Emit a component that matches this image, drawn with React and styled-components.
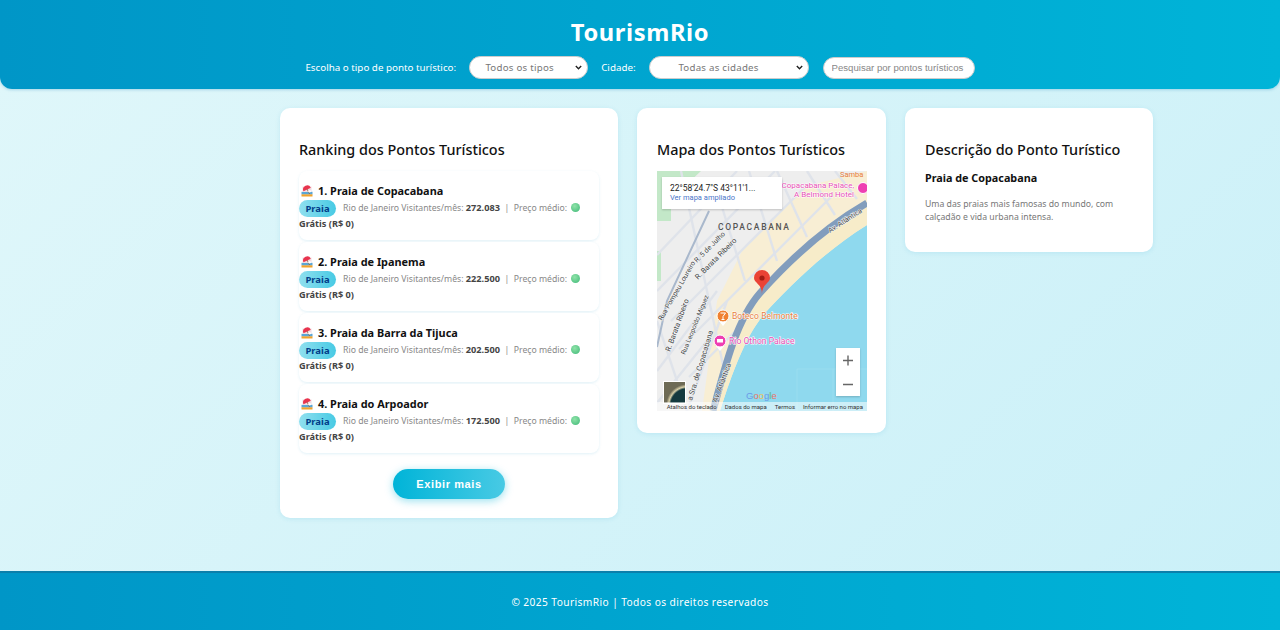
import React from 'react';
import styled, { createGlobalStyle } from 'styled-components';

const Global = createGlobalStyle`
  html, body { margin: 0; padding: 0; }
  body {
    font-family: "Noto Sans", "Open Sans", sans-serif;
    color: #111;
  }
`;

const Page = styled.div`
  min-height: 630px;
  display: flex;
  flex-direction: column;
  background: linear-gradient(135deg, #e0f7fa, #caf0f8);
`;

const Header = styled.header`
  height: 89px;
  box-sizing: border-box;
  padding-top: 16px;
  background: linear-gradient(90deg, #0096c7, #00b4d8);
  border-radius: 0 0 12px 12px;
  box-shadow: 0 1px 3px rgba(0, 119, 182, 0.25);
  color: #fff;
  display: flex;
  flex-direction: column;
  align-items: center;
`;

const Logo = styled.h1`
  margin: 0;
  font-size: 23.7px;
  line-height: 32px;
  font-weight: 700;
  letter-spacing: 0.6px;
`;

const Filters = styled.div`
  margin-top: 8px;
  display: flex;
  align-items: center;
  height: 23px;
`;

const FilterLabel = styled.label`
  font-size: 9.8px;
  margin-left: ${(p) => p.$left}px;
  margin-right: ${(p) => p.$right}px;
`;

const Select = styled.select`
  appearance: none;
  width: ${(p) => p.$width}px;
  height: 23px;
  box-sizing: border-box;
  border: 1px solid #ccc;
  border-radius: 12px;
  background: #fff url("data:image/svg+xml,%3Csvg xmlns='http://www.w3.org/2000/svg' width='7' height='5'%3E%3Cpath d='M.8 1l2.7 2.7L6.2 1' fill='none' stroke='%23222' stroke-width='1.4'/%3E%3C/svg%3E") no-repeat right 5px center;
  padding: 0 ${(p) => p.$inset}px 0 0;
  font-family: "Noto Sans", sans-serif;
  font-size: 9.7px;
  letter-spacing: 0.25px;
  color: #777;
  text-align: center;
`;

const Search = styled.input`
  width: 152px;
  height: 22px;
  margin-left: 14px;
  box-sizing: border-box;
  border: 1px solid #ccc;
  border-radius: 12px;
  padding: 0 8px;
  font-family: "Liberation Sans", sans-serif;
  font-size: 9.6px;
  &::placeholder { color: #888; }
`;

const Main = styled.main`
  flex: 1;
  display: flex;
  align-items: flex-start;
  gap: 19px;
  padding: 19px 0 0 280px;
`;

const Card = styled.section`
  width: ${(p) => p.$width}px;
  box-sizing: border-box;
  padding: 31px ${(p) => p.$pad}px 19px;
  background: #fff;
  border-radius: 10px;
  box-shadow: 0 1px 5px rgba(0, 150, 199, 0.12);
`;

const CardTitle = styled.h2`
  margin: 0 0 10px;
  font-size: 14.4px;
  line-height: 22px;
  font-weight: 500;
  color: #111;
  white-space: nowrap;
`;

const Item = styled.article`
  height: 69px;
  box-sizing: border-box;
  padding-top: 10px;
  margin-bottom: 2px;
  background: #fff;
  border-radius: 8px;
  box-shadow: 0 1px 3px rgba(0, 150, 199, 0.12);
`;

const ItemTitle = styled.h3`
  margin: 0;
  display: flex;
  align-items: center;
  gap: 5px;
  padding-left: 2px;
  font-size: 10.9px;
  line-height: 19px;
  font-weight: 700;
`;

const Info = styled.p`
  margin: 0;
  font-size: 8.7px;
  line-height: 14px;
  color: #888;
`;

const Badge = styled.span`
  display: inline-block;
  width: 37px;
  height: 17px;
  line-height: 17px;
  margin-right: 7px;
  text-align: center;
  vertical-align: middle;
  border-radius: 9px;
  background: linear-gradient(90deg, #90e0ef, #48cae4);
  color: #023e8a;
  font-weight: 700;
  font-size: 9.5px;
`;

const Strong = styled.strong`
  color: #444;
  font-size: 9.2px;
  font-weight: 700;
`;

const Dot = styled.span`
  display: inline-block;
  width: 9px;
  height: 9px;
  margin: 0 1px 0 2px;
  border-radius: 50%;
  vertical-align: -1px;
  background: radial-gradient(circle at 40% 35%, #8fe3a8, #3fb878);
`;

const More = styled.button`
  display: block;
  width: 112px;
  height: 30px;
  margin: 16px auto 0;
  border: none;
  border-radius: 15px;
  background: linear-gradient(90deg, #00b4d8, #48cae4);
  box-shadow: 0 2px 8px rgba(0, 180, 216, 0.4);
  color: #fff;
  font-family: "Liberation Sans", sans-serif;
  font-size: 11px;
  font-weight: 700;
  letter-spacing: 0.6px;
`;

const MapFrame = styled.div`
  width: 210px;
  height: 240px;
  margin-bottom: 3px;
  position: relative;
  overflow: hidden;
`;

const MapInfo = styled.div`
  position: absolute;
  left: 5px;
  top: 6px;
  width: 120px;
  height: 32px;
  box-sizing: border-box;
  padding: 6px 8px;
  background: #fff;
  box-shadow: 0 1px 2px rgba(0, 0, 0, 0.2);
  font-family: Roboto, sans-serif;
  font-size: 8.5px;
  line-height: 10px;
  color: #222;
`;

const MapLink = styled.div`
  color: #4a76c9;
  font-size: 7.5px;
`;

const Zoom = styled.div`
  position: absolute;
  right: 7px;
  bottom: 15px;
  width: 24px;
  height: 48px;
  background: #fff;
  box-shadow: 0 1px 2px rgba(0, 0, 0, 0.2);
`;

const Thumb = styled.div`
  position: absolute;
  left: 6px;
  bottom: 7px;
  width: 23px;
  height: 23px;
  border: 1px solid #fff;
  box-sizing: border-box;
  background: radial-gradient(circle at 110% 110%, #153a3f 50%, #d8cfa8 56%, #6d6a55 64%);
`;

const Attribution = styled.div`
  position: absolute;
  left: 0;
  right: 0;
  bottom: 0;
  height: 9px;
  display: flex;
  justify-content: flex-end;
  gap: 8px;
  padding-right: 4px;
  background: rgba(255, 255, 255, 0.55);
  font-family: Roboto, sans-serif;
  font-size: 6px;
  line-height: 9px;
  color: #333;
  white-space: nowrap;
`;

const DescName = styled.h3`
  margin: -2px 0 12px;
  font-size: 10.8px;
  line-height: 17px;
  font-weight: 700;
`;

const DescText = styled.p`
  margin: 0 0 10px;
  font-size: 8.7px;
  line-height: 12.5px;
  color: #777;
`;

const Footer = styled.footer`
  height: 59px;
  box-sizing: border-box;
  border-top: 2px solid #0b7fab;
  background: linear-gradient(90deg, #0096c7, #00b4d8);
  color: #fff;
  font-size: 10.2px;
  letter-spacing: 0.4px;
  display: flex;
  align-items: center;
  justify-content: center;
`;

const spots = [
  { name: '1. Praia de Copacabana', visits: '272.083' },
  { name: '2. Praia de Ipanema', visits: '222.500' },
  { name: '3. Praia da Barra da Tijuca', visits: '202.500' },
  { name: '4. Praia do Arpoador', visits: '172.500' },
];

function BeachIcon() {
  return (
    <svg width="12" height="12" viewBox="0 0 12 12">
      <rect x="0.5" y="9.2" width="11" height="2.3" fill="#f2a32c" />
      <rect x="0.5" y="6.8" width="11" height="2.4" fill="#5aa6d6" />
      <rect x="1.5" y="1.5" width="9" height="5.3" fill="#f4dbe0" />
      <path d="M2.5 6.2 A4 4 0 0 1 9.8 2.8 Z" fill="#e8344e" />
      <path d="M6 4 L8.6 9" stroke="#8a5a3a" strokeWidth="0.8" />
      <circle cx="8.6" cy="6.2" r="1.3" fill="#fff" />
    </svg>
  );
}

const streets = [
  'M0 120 L118 0', 'M14 150 L150 14', 'M22 178 L176 24', 'M32 206 L200 40', 'M0 84 L80 0',
  'M0 150 L30 240', 'M24 0 L76 240', 'M60 20 L88 110', 'M92 0 L120 90', 'M120 0 L150 66', 'M150 0 L178 44', 'M178 0 L200 28',
  'M0 200 L60 120', 'M0 232 L50 170', 'M30 240 L70 130',
];

const labels = [
  { text: 'R. 5 de Julho', x: 40, y: 92, r: -45, s: 7 },
  { text: 'R. Barata Ribeiro', x: 41, y: 109, r: -45, s: 7.5 },
  { text: 'Rua Pompeu Loureiro', x: 5, y: 150, r: -60, s: 7 },
  { text: 'R. Barata Ribeiro', x: 13, y: 181, r: -70, s: 7.5 },
  { text: 'Rua Leopoldo Miguez', x: 28, y: 184, r: -68, s: 6.6 },
  { text: 'a Sra. de Copacabana', x: 35, y: 230, r: -73, s: 7.5 },
  { text: 'Av. Atlântica', x: 60, y: 232, r: -70, s: 7.5 },
  { text: 'Av. Atlântica', x: 173, y: 62, r: -33, s: 7 },
];

function MapDrawing() {
  return (
    <svg width="210" height="240" viewBox="0 0 210 240">
      <rect width="210" height="240" fill="#eeeeee" />
      <path d="M0 0 H44 L14 28 V50 H0 Z M0 80 H4 V110 H0 Z" fill="#c3e8c8" />
      <path d="M45 240 L60 130 L85 80 L150 15 L210 0 V60 L70 240 Z" fill="#f8eed4" />
      <g fill="none" stroke="#dfe3ea" strokeWidth="2.4">
        {streets.map((d) => <path key={d} d={d} />)}
      </g>
      <path d="M0 176 L10 130 L52 40" fill="none" stroke="#a9b8cc" strokeWidth="2" />
      <path d="M210 54 C165 82 128 120 108 142 C88 165 74 205 63 240 H210 Z" fill="#8fd9ee" />
      <path d="M210 36 C165 62 122 100 100 126 C78 150 66 195 54 240 H63 C74 205 88 165 108 142 C128 120 165 82 210 54 Z" fill="#f7ecc9" />
      <path d="M210 32 C165 58 128 94 103 122 C80 148 68 195 56 240" fill="none" stroke="#829dbd" strokeWidth="7" />
      <path d="M140 240 V198 H210 M176 198 V240" fill="none" stroke="#a3e0f0" strokeWidth="0.6" />

      {labels.map((l) => (
        <text key={l.text + l.x} x={l.x} y={l.y} fontSize={l.s} fontFamily="Roboto, sans-serif" fill="#444"
          stroke="#f4f6f8" strokeWidth="1" paintOrder="stroke" transform={`rotate(${l.r} ${l.x} ${l.y})`}>{l.text}</text>
      ))}
      <text x="61" y="59" fontSize="8.5" letterSpacing="1.7" fontFamily="Roboto, sans-serif" fill="#555" fontWeight="500">COPACABANA</text>
      <text x="197" y="17" textAnchor="end" fontSize="8" fontFamily="Roboto, sans-serif" fill="#e84fb5" stroke="#fff" strokeWidth="1" paintOrder="stroke">Copacabana Palace,</text>
      <text x="197" y="26" textAnchor="end" fontSize="8" fontFamily="Roboto, sans-serif" fill="#e84fb5" stroke="#fff" strokeWidth="1" paintOrder="stroke">A Belmond Hotel</text>
      <text x="183" y="6" fontSize="7.5" fontFamily="Roboto, sans-serif" fill="#e8803c">Samba</text>
      <circle cx="206" cy="17" r="5.5" fill="#ee3fb2" stroke="#fff" />

      <path d="M62 150 L66 155 L70 150 Z" fill="#fff" />
      <circle cx="66" cy="145" r="6" fill="#f08030" stroke="#fff" />
      <path d="M63.5 142 H68.5 L66 145.5 V148 M64.5 148.5 H67.5" fill="none" stroke="#fff" strokeWidth="1" />
      <text x="75" y="148" fontSize="8.6" fontFamily="Roboto, sans-serif" fill="#e8803c" stroke="#fff" strokeWidth="1" paintOrder="stroke">Boteco Belmonte</text>
      <path d="M59 175 L63 180 L67 175 Z" fill="#fff" />
      <circle cx="63" cy="170" r="6" fill="#ee3fb2" stroke="#fff" />
      <rect x="60" y="168" width="6" height="3.5" fill="#fff" />
      <text x="72" y="173" fontSize="8.6" fontFamily="Roboto, sans-serif" fill="#e84fb5" stroke="#fff" strokeWidth="1" paintOrder="stroke">Rio Othon Palace</text>

      <path d="M105 123 C105 113 97 112 97 107 A8 8 0 1 1 113 107 C113 112 105 113 105 123 Z" fill="#ea4335" />
      <circle cx="105" cy="107" r="2.6" fill="#a31d14" />

      <text x="89" y="228" fontSize="9.5" fontWeight="500" fontFamily="Liberation Sans, sans-serif">
        <tspan fill="#6c9ae8">G</tspan><tspan fill="#e8736a">o</tspan><tspan fill="#eec04e">o</tspan><tspan fill="#6c9ae8">g</tspan><tspan fill="#62b87a">l</tspan><tspan fill="#e8736a">e</tspan>
      </text>
    </svg>
  );
}

export default function App() {
  return (
    <Page>
      <Global />
      <Header>
        <Logo>TourismRio</Logo>
        <Filters>
          <FilterLabel $left={0} $right={13}>Escolha o tipo de ponto turístico:</FilterLabel>
          <Select $width={119} $inset={18}><option>Todos os tipos</option></Select>
          <FilterLabel $left={13} $right={13}>Cidade:</FilterLabel>
          <Select $width={160} $inset={20}><option>Todas as cidades</option></Select>
          <Search placeholder="Pesquisar por pontos turísticos" />
        </Filters>
      </Header>

      <Main>
        <Card $width={338} $pad={19}>
          <CardTitle>Ranking dos Pontos Turísticos</CardTitle>
          {spots.map((spot) => (
            <Item key={spot.name}>
              <ItemTitle><BeachIcon />{spot.name}</ItemTitle>
              <Info>
                <Badge>Praia</Badge>
                Rio de Janeiro Visitantes/mês: <Strong>{spot.visits}</Strong> &nbsp;|&nbsp; Preço médio: <Dot />
                <br />
                <Strong>Grátis (R$ 0)</Strong>
              </Info>
            </Item>
          ))}
          <More>Exibir mais</More>
        </Card>

        <Card $width={249} $pad={20}>
          <CardTitle>Mapa dos Pontos Turísticos</CardTitle>
          <MapFrame>
            <MapDrawing />
            <MapInfo>
              22°58'24.7"S 43°11'1...
              <MapLink>Ver mapa ampliado</MapLink>
            </MapInfo>
            <Thumb />
            <Zoom>
              <svg width="24" height="48" viewBox="0 0 24 48">
                <path d="M7 12.5 H17 M12 7.5 V17.5 M7 36.5 H17" stroke="#666" strokeWidth="1.4" />
              </svg>
            </Zoom>
            <Attribution>
              <span>Atalhos do teclado</span>
              <span>Dados do mapa</span>
              <span>Termos</span>
              <span>Informar erro no mapa</span>
            </Attribution>
          </MapFrame>
        </Card>

        <Card $width={248} $pad={20}>
          <CardTitle>Descrição do Ponto Turístico</CardTitle>
          <DescName>Praia de Copacabana</DescName>
          <DescText>Uma das praias mais famosas do mundo, com calçadão e vida urbana intensa.</DescText>
        </Card>
      </Main>

      <Footer>© 2025 TourismRio | Todos os direitos reservados</Footer>
    </Page>
  );
}
